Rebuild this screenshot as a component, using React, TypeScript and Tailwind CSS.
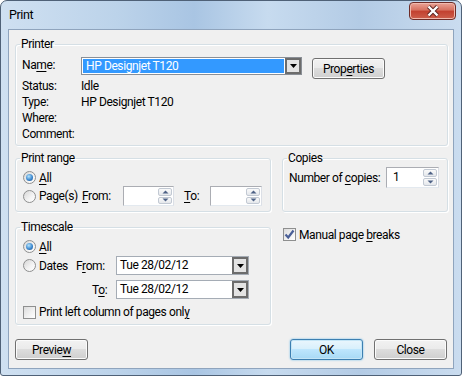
import React from 'react';

function U({ children }: { children: React.ReactNode }) {
  return <span className="underline decoration-1 underline-offset-[2px]">{children}</span>;
}

function GroupBox({ title, className, children }: { title: string; className: string; children: React.ReactNode }) {
  return (
    <fieldset className={`rounded-[3px] border border-[#d5dfe5] shadow-[inset_1px_1px_0_#ffffff,1px_1px_0_#ffffff] ${className}`}>
      <legend className="ml-[4px] px-[1px] leading-[16px]">{title}</legend>
      {children}
    </fieldset>
  );
}

function Radio({ checked }: { checked?: boolean }) {
  return (
    <span className="flex h-[13px] w-[13px] shrink-0 items-center justify-center rounded-full border border-[#8e8f8f] bg-[linear-gradient(135deg,#d6d6d6,#f4f4f4_60%,#ffffff)]">
      {checked && (
        <span className="h-[7px] w-[7px] rounded-full bg-[radial-gradient(circle_at_40%_35%,#b6e4fc,#3e8ad0_55%,#1a4b86)]" />
      )}
    </span>
  );
}

function Checkbox({ checked }: { checked?: boolean }) {
  return (
    <span className="flex h-[13px] w-[13px] shrink-0 items-center justify-center border border-[#8e8f8f] bg-[linear-gradient(135deg,#dcdcdc,#f2f2f2_60%,#ffffff)]">
      {checked && (
        <svg width="11" height="11" viewBox="0 0 11 11">
          <path d="M1.5 5.5 L4.2 8.5 L9.5 1.5" fill="none" stroke="#4a5f97" strokeWidth="2.2" />
        </svg>
      )}
    </span>
  );
}

function Arrow({ up }: { up?: boolean }) {
  return (
    <svg width="7" height="4" viewBox="0 0 7 4">
      <path d={up ? 'M0.5 3.5 L3.5 0.5 L6.5 3.5 Z' : 'M0.5 0.5 L3.5 3.5 L6.5 0.5 Z'} fill="#4d6185" />
    </svg>
  );
}

function Spinner({ className, value }: { className: string; value?: string }) {
  return (
    <div className={`flex border border-[#abadb3] border-b-[#e3e9ef] border-r-[#dbdfe6] bg-white ${className}`}>
      <span className="flex-1 pl-[6px] leading-[18px]">{value}</span>
      <div className="flex w-[16px] flex-col gap-px p-px">
        <span className="flex flex-1 items-center justify-center rounded-[2px] border border-[#c2c9d3] bg-[linear-gradient(#fafafa,#e4e7eb)]">
          <Arrow up />
        </span>
        <span className="flex flex-1 items-center justify-center rounded-[2px] border border-[#c2c9d3] bg-[linear-gradient(#fafafa,#e4e7eb)]">
          <Arrow />
        </span>
      </div>
    </div>
  );
}

function DropButton() {
  return (
    <span className="flex w-[16px] items-center justify-center border-2 border-[#6c6c6c] bg-[#e3e3e3]">
      <svg width="7" height="4" viewBox="0 0 7 4">
        <path d="M0 0 L7 0 L3.5 4 Z" fill="#000000" />
      </svg>
    </span>
  );
}

function DateCombo({ value }: { value: string }) {
  return (
    <div className="flex h-[19px] w-[133px] border border-[#a5acb5] bg-white">
      <span className="flex-1 pl-[3px] leading-[16px]">{value}</span>
      <DropButton />
    </div>
  );
}

function Button({ children, primary, className = '' }: { children: React.ReactNode; primary?: boolean; className?: string }) {
  const look = primary
    ? 'border-[#3c7fb1] bg-[linear-gradient(#eaf6fd,#d9f0fc_45%,#bee6fd_50%,#a7d9f5)] shadow-[inset_0_0_0_1px_#c4e5f6,0_0_2px_#5fb6e8]'
    : 'border-[#707070] bg-[linear-gradient(#f2f2f2,#ebebeb_45%,#dddddd_50%,#cfcfcf)] shadow-[inset_0_0_0_1px_#fbfbfb]';
  return (
    <div className={`flex h-[21px] w-[73px] items-center justify-center rounded-[3px] border ${look} ${className}`}>
      {children}
    </div>
  );
}

export default function App() {
  return (
    <div className="flex h-[376px] w-[462px] flex-col overflow-hidden whitespace-nowrap rounded-t-[7px] rounded-b-[3px] border border-[#4f6177] bg-[linear-gradient(90deg,#cfe0f1,#bcd3ea_25%,#a9c5e3_42%,#c7dbef_58%,#b3cbe5_78%,#cadcef)] font-['Roboto',sans-serif] text-[12px] tracking-[-0.4px] text-black">
      {/* title bar */}
      <div className="flex h-[28px] items-start">
        <span className="ml-[8px] mt-[6px] text-[12.5px] leading-[16px]">Print</span>
        <div className="ml-auto mr-[5px] mt-[1px] flex h-[18px] w-[47px] items-center justify-center rounded-[4px] border border-[#6e2c27] bg-[linear-gradient(#eaa396,#d6705f_45%,#c2402f_50%,#cd5f4c)] shadow-[inset_0_0_0_1px_#f0b9ae]">
          <svg width="14" height="12" viewBox="0 0 14 12">
            <path d="M2.5 1.5 L11.5 10.5 M11.5 1.5 L2.5 10.5" stroke="#5a2420" strokeWidth="4.2" />
            <path d="M2.5 1.5 L11.5 10.5 M11.5 1.5 L2.5 10.5" stroke="#ffffff" strokeWidth="2.4" />
          </svg>
        </div>
      </div>

      {/* client */}
      <div className="mx-[7px] flex h-[340px] flex-col border border-[#8fa4bd] bg-[#f0f0f0] pl-[6px] pr-[5px] pt-[6px]">
        <GroupBox title="Printer" className="h-[110px]">
          <div className="pl-[6px] pt-[5px]">
            <div className="flex h-[21px] items-start">
              <span className="w-[59px] leading-[16px]">
                Na<U>m</U>e:
              </span>
              <div className="flex h-[18px] w-[221px] border border-[#8a8f96] bg-white">
                <span className="m-px flex-1 bg-[#3399ff] pl-[3px] leading-[14px] text-white">HP Designjet T120</span>
                <DropButton />
              </div>
              <Button className="ml-[10px] mt-px">
                Prop<U>e</U>rties
              </Button>
            </div>
            <div className="flex leading-[16px]">
              <span className="w-[59px]">Status:</span>
              <span>Idle</span>
            </div>
            <div className="flex leading-[16px]">
              <span className="w-[59px]">Type:</span>
              <span>HP Designjet T120</span>
            </div>
            <div className="flex leading-[16px]">
              <span className="w-[59px]">Where:</span>
            </div>
            <div className="flex leading-[16px]">
              <span className="w-[59px]">Comment:</span>
            </div>
          </div>
        </GroupBox>

        <div className="mt-[4px] flex gap-[11px]">
          <GroupBox title="Print range" className="h-[62px] w-[256px]">
            <div className="pl-[7px] pt-[3px]">
              <div className="flex h-[17px] items-center gap-[3px]">
                <Radio checked />
                <span>
                  <U>A</U>ll
                </span>
              </div>
              <div className="flex h-[20px] items-center">
                <div className="flex w-[59px] shrink-0 items-center gap-[3px]">
                  <Radio />
                  <span>Page(s)</span>
                </div>
                <span className="w-[41px]">
                  <U>F</U>rom:
                </span>
                <Spinner className="h-[20px] w-[51px]" />
                <span className="ml-[10px] w-[26px]">
                  <U>T</U>o:
                </span>
                <Spinner className="h-[20px] w-[52px]" />
              </div>
            </div>
          </GroupBox>
          <GroupBox title="Copies" className="h-[62px] w-[166px]">
            <div className="flex h-[21px] items-center pl-[6px] pt-[2px]">
              <span className="w-[97px]">
                Number of <U>c</U>opies:
              </span>
              <Spinner className="h-[21px] w-[53px]" value="1" />
            </div>
          </GroupBox>
        </div>

        <div className="mt-[7px] flex gap-[11px]">
          <GroupBox title="Timescale" className="h-[106px] w-[256px]">
            <div className="pl-[7px] pt-[3px]">
              <div className="flex h-[17px] items-center gap-[3px]">
                <Radio checked />
                <span>
                  <U>A</U>ll
                </span>
              </div>
              <div className="flex h-[21px] items-center">
                <div className="flex w-[53px] items-center gap-[3px]">
                  <Radio />
                  <span>Dates</span>
                </div>
                <span className="w-[40px]">
                  F<U>r</U>om:
                </span>
                <DateCombo value="Tue 28/02/12" />
              </div>
              <div className="flex h-[27px] items-center">
                <span className="ml-[69px] w-[24px]">
                  T<U>o</U>:
                </span>
                <DateCombo value="Tue 28/02/12" />
              </div>
              <div className="flex h-[18px] items-center gap-[3px]">
                <Checkbox />
                <span>
                  Print left column of pages onl<U>y</U>
                </span>
              </div>
            </div>
          </GroupBox>
          <div className="flex h-[16px] items-center gap-[3px] pl-px pt-[15px]">
            <Checkbox checked />
            <span>
              Manual page <U>b</U>reaks
            </span>
          </div>
        </div>

        <div className="mt-[14px] flex">
          <Button>
            Previe<U>w</U>
          </Button>
          <Button primary className="ml-auto">
            OK
          </Button>
          <Button className="ml-[11px] mr-px">Close</Button>
        </div>
      </div>
    </div>
  );
}
